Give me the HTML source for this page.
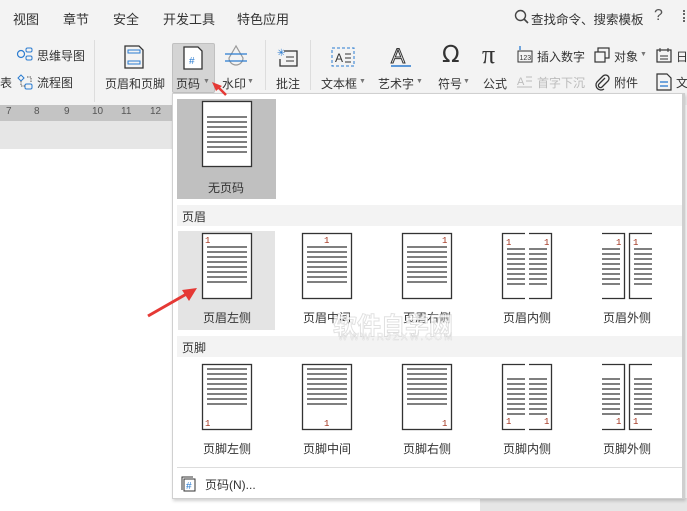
<!DOCTYPE html>
<html><head><meta charset="utf-8"><style>
*{margin:0;padding:0;box-sizing:border-box}
body{width:687px;height:511px;overflow:hidden;position:relative;background:#fff;font-family:"Liberation Sans","Noto Sans CJK SC",sans-serif;color:#333;font-size:12px}
.a{position:absolute;white-space:nowrap}
.tab{font-size:13px;top:9px;color:#333}
.lbl{font-size:12px;color:#333}
.dd{font-size:7px;color:#777}
svg{position:absolute;overflow:visible}
</style></head><body>
<div class="a" style="left:0;top:0;width:687px;height:105px;background:#f3f3f3"></div>
<div class="a tab" style="left:13px">视图</div>
<div class="a tab" style="left:63px">章节</div>
<div class="a tab" style="left:113px">安全</div>
<div class="a tab" style="left:163px">开发工具</div>
<div class="a tab" style="left:237px">特色应用</div>
<svg style="left:514px;top:9px" width="16" height="16"><circle cx="6.5" cy="6.5" r="5" fill="none" stroke="#444" stroke-width="1.4"/><line x1="10" y1="10" x2="14" y2="14" stroke="#444" stroke-width="1.6"/></svg>
<div class="a" style="left:531px;top:9px;font-size:12.5px">查找命令、搜索模板</div>
<div class="a" style="left:654px;top:7px;font-size:16px;color:#555">?</div>
<div class="a" style="left:683px;top:10px;width:2px;height:12px;border-left:2px dotted #666"></div>

<div class="a" style="left:0;top:105px;width:172px;height:16px;background:#c4c4c4"></div>
<div class="a" style="left:0;top:121px;width:172px;height:28px;background:#e6e6e6"></div>
<div class="a" style="left:6px;top:106px;font-size:10px;color:#555">7</div>
<div class="a" style="left:34px;top:106px;font-size:10px;color:#555">8</div>
<div class="a" style="left:64px;top:106px;font-size:10px;color:#555">9</div>
<div class="a" style="left:92px;top:106px;font-size:10px;color:#555">10</div>
<div class="a" style="left:121px;top:106px;font-size:10px;color:#555">11</div>
<div class="a" style="left:150px;top:106px;font-size:10px;color:#555">12</div>
<div class="a" style="left:94px;top:40px;width:1px;height:62px;background:#ddd"></div>
<div class="a" style="left:265px;top:40px;width:1px;height:50px;background:#ddd"></div>
<div class="a" style="left:310px;top:40px;width:1px;height:50px;background:#ddd"></div>
<div class="a" style="left:480px;top:498px;width:207px;height:13px;background:#e6e6e6"></div>

<svg style="left:17px;top:47px" width="16" height="14"><circle cx="4" cy="7" r="3.5" fill="none" stroke="#2a7bd0" stroke-width="1.2"/><rect x="9" y="1" width="6" height="4" rx="1.5" fill="none" stroke="#2a7bd0"/><rect x="9" y="9" width="6" height="4" rx="1.5" fill="none" stroke="#2a7bd0"/></svg>
<div class="a lbl" style="left:37px;top:47px">思维导图</div>
<div class="a lbl" style="left:0;top:74px">表</div>
<svg style="left:17px;top:74px" width="16" height="16"><path d="M4 1 L7 4 L4 7 L1 4Z" fill="none" stroke="#2a7bd0"/><rect x="8" y="10" width="7" height="5" rx="1.5" fill="none" stroke="#2a7bd0"/><path d="M4 7 V12 H8 M10 3 H14 V8" fill="none" stroke="#555" stroke-dasharray="1.5 1"/></svg>
<div class="a lbl" style="left:37px;top:74px">流程图</div>

<svg style="left:124px;top:45px" width="20" height="24"><path d="M1 1 H15 L19 5 V23 H1Z" fill="none" stroke="#333" stroke-width="1.3"/><rect x="4" y="5" width="12" height="3" fill="none" stroke="#2a7bd0"/><rect x="4" y="16" width="12" height="3" fill="none" stroke="#2a7bd0"/></svg>
<div class="a lbl" style="left:105px;top:75px">页眉和页脚</div>

<div class="a" style="left:172px;top:43px;width:43px;height:50px;background:#d4d4d4;border:1px solid #c0c0c0;border-radius:2px"></div>
<svg style="left:183px;top:46px" width="20" height="24"><path d="M1 1 H15 L19 5 V23 H1Z" fill="#fff" stroke="#333" stroke-width="1.3"/><text x="6" y="18" font-size="10" fill="#2a7bd0" font-family="Liberation Sans">#</text></svg>
<div class="a lbl" style="left:176px;top:75px">页码</div><div class="a dd" style="left:203px;top:78px">▼</div>

<svg style="left:224px;top:44px" width="24" height="24"><path d="M12 2 L5 14 A7 7 0 0 0 19 14 Z" fill="none" stroke="#999" stroke-width="1.2"/><line x1="1" y1="10" x2="23" y2="10" stroke="#2a7bd0" stroke-width="1.3"/><line x1="1" y1="17" x2="23" y2="17" stroke="#2a7bd0" stroke-width="1.3"/></svg>
<div class="a lbl" style="left:222px;top:75px">水印</div><div class="a dd" style="left:247px;top:78px">▼</div>

<svg style="left:277px;top:47px" width="22" height="22"><text x="0" y="9" font-size="10" fill="#2a7bd0">✳</text><path d="M7 4 H20 V19 H3 V12" fill="none" stroke="#333" stroke-width="1.3"/><line x1="9" y1="10" x2="17" y2="10" stroke="#333"/><line x1="9" y1="14" x2="17" y2="14" stroke="#333"/></svg>
<div class="a lbl" style="left:276px;top:75px">批注</div>

<svg style="left:331px;top:47px" width="24" height="20"><rect x="1" y="1" width="22" height="18" fill="none" stroke="#2a7bd0" stroke-dasharray="3 2"/><text x="4" y="15" font-size="12" fill="#333">A</text><line x1="14" y1="7" x2="20" y2="7" stroke="#333"/><line x1="14" y1="11" x2="20" y2="11" stroke="#333"/><line x1="14" y1="15" x2="20" y2="15" stroke="#333"/></svg>
<div class="a lbl" style="left:321px;top:75px">文本框</div><div class="a dd" style="left:359px;top:78px">▼</div>
<svg style="left:389px;top:44px" width="24" height="26"><text x="2" y="19" font-size="21" fill="none" stroke="#333" stroke-width="1" font-family="Liberation Sans">A</text><line x1="2" y1="22" x2="22" y2="22" stroke="#2a7bd0" stroke-width="1.4"/></svg>
<div class="a lbl" style="left:378px;top:75px">艺术字</div><div class="a dd" style="left:416px;top:78px">▼</div>
<div class="a" style="left:442px;top:42px;font-size:23px;color:#333;font-family:'DejaVu Sans',sans-serif">Ω</div>
<div class="a lbl" style="left:438px;top:75px">符号</div><div class="a dd" style="left:463px;top:78px">▼</div>
<div class="a" style="left:482px;top:40px;font-size:26px;color:#333;font-family:'Liberation Serif',serif">π</div>
<div class="a lbl" style="left:483px;top:75px">公式</div>
<svg style="left:517px;top:46px" width="16" height="18"><rect x="1" y="5" width="14" height="11" fill="none" stroke="#333"/><text x="2.5" y="14" font-size="7" fill="#333">123</text><path d="M3 0 V4" stroke="#2a7bd0" stroke-width="1.3"/></svg>
<div class="a lbl" style="left:537px;top:48px">插入数字</div>
<svg style="left:517px;top:74px" width="16" height="14"><text x="0" y="11" font-size="11" fill="#bbb">A</text><line x1="9" y1="3" x2="15" y2="3" stroke="#bbb"/><line x1="9" y1="7" x2="15" y2="7" stroke="#bbb"/><line x1="0" y1="13" x2="15" y2="13" stroke="#bbb"/></svg>
<div class="a lbl" style="left:537px;top:74px;color:#bbb">首字下沉</div>
<svg style="left:594px;top:47px" width="16" height="16"><rect x="4" y="1" width="11" height="10" fill="none" stroke="#333" stroke-width="1.2"/><rect x="1" y="5" width="10" height="10" fill="#f3f3f3" stroke="#333" stroke-width="1.2"/></svg>
<div class="a lbl" style="left:614px;top:48px">对象</div><div class="a dd" style="left:640px;top:51px">▼</div>
<svg style="left:594px;top:74px" width="16" height="16"><path d="M11 4 L5 10 A2 2 0 0 0 8 13 L14 7 A3.5 3.5 0 0 0 9 2 L3 8 A5 5 0 0 0 10 15" fill="none" stroke="#333" stroke-width="1.3"/></svg>
<div class="a lbl" style="left:614px;top:74px">附件</div>
<svg style="left:656px;top:47px" width="16" height="16"><rect x="1" y="3" width="14" height="12" fill="none" stroke="#333" stroke-width="1.2"/><line x1="4" y1="1" x2="4" y2="5" stroke="#333"/><line x1="12" y1="1" x2="12" y2="5" stroke="#333"/><line x1="4" y1="9" x2="12" y2="9" stroke="#333"/><line x1="4" y1="12" x2="12" y2="12" stroke="#333"/></svg>
<div class="a lbl" style="left:676px;top:48px">日</div>
<svg style="left:656px;top:73px" width="16" height="18"><path d="M1 1 H11 L15 5 V17 H1Z" fill="none" stroke="#333" stroke-width="1.2"/><line x1="4" y1="9" x2="12" y2="9" stroke="#2a7bd0" stroke-width="1.3"/><line x1="4" y1="13" x2="12" y2="13" stroke="#2a7bd0" stroke-width="1.3"/></svg>
<div class="a lbl" style="left:676px;top:74px">文</div>

<div class="a" style="left:172px;top:93px;width:513px;height:406px;background:#fff;border:1px solid #d0d0d0;box-shadow:1px 2px 3px rgba(0,0,0,.18)"></div>
<div class="a" style="left:682px;top:93px;width:3px;height:406px;background:#cfcfcf"></div>
<div class="a" style="left:177px;top:99px;width:99px;height:100px;background:#c0c0c0"></div>
<div class="a" style="left:177px;top:205px;width:505px;height:21px;background:#f3f3f3"></div>
<div class="a lbl" style="left:182px;top:208px">页眉</div>
<div class="a" style="left:178px;top:231px;width:97px;height:99px;background:#e4e4e4"></div>
<div class="a" style="left:177px;top:336px;width:505px;height:21px;background:#f3f3f3"></div>
<div class="a lbl" style="left:182px;top:339px">页脚</div>
<div class="a" style="left:177px;top:467px;width:505px;height:1px;background:#ddd"></div>
<svg style="left:181px;top:476px" width="16" height="16"><path d="M1 14 V1 H12" fill="none" stroke="#333"/><rect x="3" y="3" width="11" height="12" fill="#fff" stroke="#333"/><text x="5" y="13" font-size="10" fill="#2a7bd0">#</text></svg>
<div class="a lbl" style="left:205px;top:476px">页码(N)...</div>

<svg style="left:0;top:0" width="687" height="511">
<defs>
<g id="L"><line x1="0" y1="0" x2="40" y2="0"/><line x1="0" y1="5" x2="40" y2="5"/><line x1="0" y1="10" x2="40" y2="10"/><line x1="0" y1="15" x2="40" y2="15"/><line x1="0" y1="20" x2="40" y2="20"/><line x1="0" y1="25" x2="40" y2="25"/><line x1="0" y1="30" x2="40" y2="30"/><line x1="0" y1="35" x2="40" y2="35"/></g>
<g id="H"><line x1="0" y1="0" x2="18" y2="0"/><line x1="0" y1="5" x2="18" y2="5"/><line x1="0" y1="10" x2="18" y2="10"/><line x1="0" y1="15" x2="18" y2="15"/><line x1="0" y1="20" x2="18" y2="20"/><line x1="0" y1="25" x2="18" y2="25"/><line x1="0" y1="30" x2="18" y2="30"/><line x1="0" y1="35" x2="18" y2="35"/></g>
</defs>
<g stroke="#333" stroke-width="1.3" fill="none">
<rect x="202.5" y="101.5" width="49" height="65" fill="#fff"/>
<use href="#L" x="207" y="117"/>
<rect x="202.5" y="233.5" width="49" height="65" fill="#fff"/><use href="#L" x="207" y="247"/>
<rect x="302.5" y="233.5" width="49" height="65"/><use href="#L" x="307" y="247"/>
<rect x="402.5" y="233.5" width="49" height="65"/><use href="#L" x="407" y="247"/>
<path d="M525 233.5 H502.5 V298.5 H525 M529 233.5 H551.5 V298.5 H529"/><use href="#H" x="507" y="249"/><use href="#H" x="529" y="249"/>
<path d="M602 233.5 H624.5 V298.5 H602 M652 233.5 H629.5 V298.5 H652"/><use href="#H" x="602" y="249"/><use href="#H" x="634" y="249"/>
<rect x="202.5" y="364.5" width="49" height="65"/><use href="#L" x="207" y="369"/>
<rect x="302.5" y="364.5" width="49" height="65"/><use href="#L" x="307" y="369"/>
<rect x="402.5" y="364.5" width="49" height="65"/><use href="#L" x="407" y="369"/>
<path d="M525 364.5 H502.5 V429.5 H525 M529 364.5 H551.5 V429.5 H529"/><use href="#H" x="507" y="379"/><use href="#H" x="529" y="379"/>
<path d="M602 364.5 H624.5 V429.5 H602 M652 364.5 H629.5 V429.5 H652"/><use href="#H" x="602" y="379"/><use href="#H" x="634" y="379"/>
</g>
<g fill="#a0301a" font-size="9" font-family="Liberation Mono">
<text x="205" y="243">1</text><text x="324" y="243">1</text><text x="442" y="243">1</text>
<text x="506" y="245">1</text><text x="544" y="245">1</text><text x="616" y="245">1</text><text x="633" y="245">1</text>
<text x="205" y="426">1</text><text x="324" y="426">1</text><text x="442" y="426">1</text>
<text x="506" y="424">1</text><text x="544" y="424">1</text><text x="616" y="424">1</text><text x="633" y="424">1</text>
</g>
<path d="M148 316 L190 292" stroke="#e53935" stroke-width="3"/><path d="M197 288 L182 290 L189 301Z" fill="#e53935"/>
<path d="M226 95 L218 87" stroke="#e53935" stroke-width="2.5"/><path d="M212 82 L222 86 L216 91Z" fill="#e53935"/>
</svg>
<div class="a lbl" style="left:208px;top:179px">无页码</div>
<div class="a lbl" style="left:203px;top:309px">页眉左侧</div>
<div class="a lbl" style="left:303px;top:309px">页眉中间</div>
<div class="a lbl" style="left:403px;top:309px">页眉右侧</div>
<div class="a lbl" style="left:503px;top:309px">页眉内侧</div>
<div class="a lbl" style="left:603px;top:309px">页眉外侧</div>
<div class="a lbl" style="left:203px;top:440px">页脚左侧</div>
<div class="a lbl" style="left:303px;top:440px">页脚中间</div>
<div class="a lbl" style="left:403px;top:440px">页脚右侧</div>
<div class="a lbl" style="left:503px;top:440px">页脚内侧</div>
<div class="a lbl" style="left:603px;top:440px">页脚外侧</div>
<div class="a" style="left:333px;top:306px;font-size:24px;font-weight:bold;color:rgba(255,255,255,.8);-webkit-text-stroke:1px rgba(170,170,170,.35)">软件自学网</div>
<div class="a" style="left:338px;top:332px;font-size:10px;letter-spacing:2px;color:rgba(255,255,255,.8);-webkit-text-stroke:.5px rgba(170,170,170,.35)">WWW.RJZXW.COM</div>
</body></html>
